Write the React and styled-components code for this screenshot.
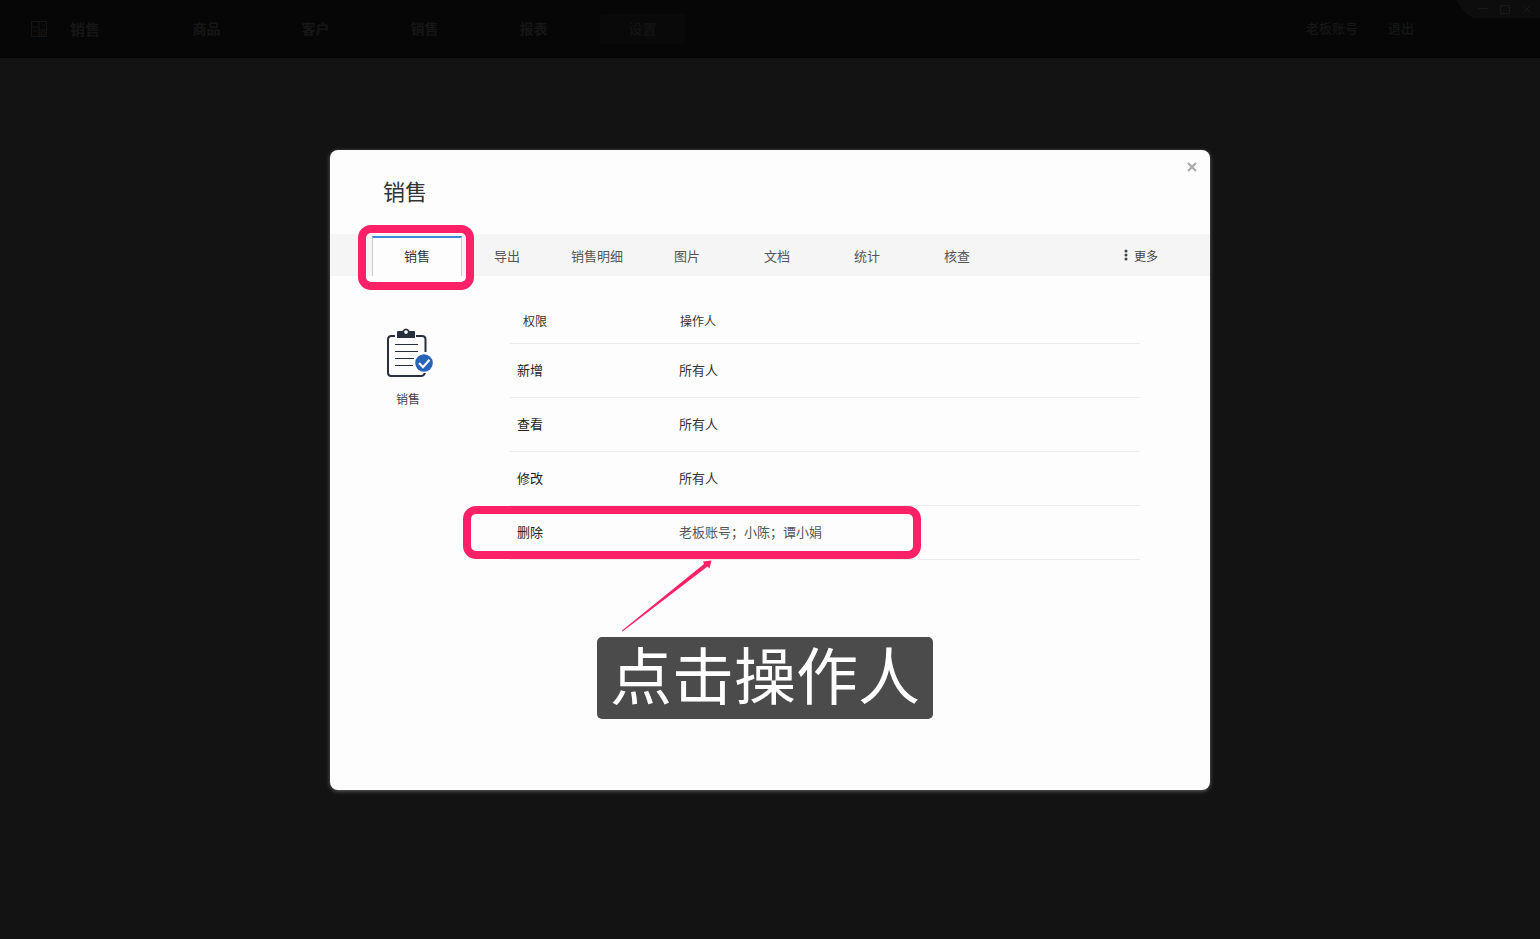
import React from "react";
import styled, { createGlobalStyle } from "styled-components";

const GlobalStyle = createGlobalStyle`
  *, *::before, *::after { box-sizing: border-box; }
  body {
    margin: 0;
    background: #131313;
    color: #333;
    font-family: "Noto Sans CJK SC", "Noto Sans", sans-serif;
  }
  button { font: inherit; border: 0; padding: 0; background: none; cursor: pointer; }
`;

const PINK = "#ff2168";

const Page = styled.div`
  min-height: 100vh;
  display: flex;
  flex-direction: column;
`;

const Header = styled.header`
  position: relative;
  height: 58px;
  display: flex;
  align-items: center;
  padding: 0 126px 0 30px;
  background: #060606;
  color: #161616;
`;

const Brand = styled.div`
  width: 134px;
  display: flex;
  align-items: center;
  gap: 22px;
  font-size: 15px;
  line-height: 20px;
  font-weight: 700;
`;

const Nav = styled.nav`
  display: flex;
  gap: 24px;
`;

const NavButton = styled.button`
  && {
    width: 85px;
    height: 30px;
    padding-bottom: 2px;
    border-radius: 2px;
    color: ${(p) => (p.$active ? "#131313" : "#161616")};
    background: ${(p) => (p.$active ? "#090909" : "none")};
    font-size: 14px;
    font-weight: 700;
  }
`;

const Account = styled.div`
  margin-left: auto;
  padding-bottom: 2px;
  display: flex;
  gap: 30px;
  font-size: 13px;
  line-height: 20px;
  font-weight: 500;
`;

const AccountButton = styled.button`
  && { color: inherit; }
`;

const WindowControls = styled.div`
  position: absolute;
  top: 0;
  right: 0;
  width: 84px;
  height: 18px;
  padding-left: 16px;
  display: flex;
  align-items: center;
  background: #0d0d0d;
  clip-path: polygon(0 0, 100% 0, 100% 100%, 17px 100%, 10px 14px);
`;

const WindowButton = styled.button`
  && {
    width: 22px;
    height: 18px;
    display: grid;
    place-items: center;
    color: #191919;
  }
`;

const Main = styled.main`
  flex: 1;
  display: flex;
  justify-content: center;
  align-items: flex-start;
  padding: 92px 24px;
`;

const Dialog = styled.section`
  position: relative;
  width: 100%;
  max-width: 880px;
  min-height: 640px;
  border-radius: 8px;
  background: #fdfdfd;
  box-shadow: 0 1px 4px rgba(255, 255, 255, 0.35);
`;

const DialogHeader = styled.div`
  height: 84px;
  padding: 0 12px 0 53px;
  display: flex;
  justify-content: space-between;
`;

const Title = styled.h1`
  margin: 24px 0 0;
  font-size: 22px;
  line-height: 32px;
  font-weight: 400;
  color: #333;
`;

const CloseButton = styled.button`
  && {
    width: 12px;
    height: 34px;
    display: grid;
    place-items: center;
    color: #aaa;
  }
`;

const TabBar = styled.div`
  display: flex;
  height: 42px;
  padding: 0 52px 0 42px;
  background: #f5f5f5;
`;

const Tab = styled.button`
  && {
    position: relative;
    width: 90px;
    margin-top: 2px;
    padding-bottom: 4px;
    font-size: 13px;
    color: ${(p) => (p.$active ? "#333" : "#555")};
    background: ${(p) => (p.$active ? "#fdfdfd" : "none")};
    border: solid ${(p) => (p.$active ? "#ccc" : "transparent")};
    border-width: 0 1px;
    border-top: 2px solid ${(p) => (p.$active ? "#3a8bd8" : "transparent")};
  }
`;

const TabMarker = styled.span`
  position: absolute;
  inset: -13px -13px -14px -15px;
  border: 8px solid ${PINK};
  border-radius: 13px;
  pointer-events: none;
`;

const MoreButton = styled.button`
  && {
    margin-left: auto;
    display: flex;
    align-items: center;
    gap: 6px;
    font-size: 12px;
    color: #444;
  }
`;

const Content = styled.div`
  display: flex;
  padding: 22px 70px 0 50px;
`;

const FormCard = styled.div`
  width: 56px;
  margin: 30px 74px 0 0;
  display: flex;
  flex-direction: column;
  align-items: center;
  gap: 10px;
  font-size: 12px;
  line-height: 18px;
  color: #444;
`;

const Table = styled.table`
  flex: 1;
  table-layout: fixed;
  border-collapse: separate;
  border-spacing: 0;
  text-align: left;
`;

const HeadCell = styled.th`
  width: ${(p) => (p.$first ? "162px" : "auto")};
  height: 46px;
  padding: 0 0 0 ${(p) => (p.$first ? 13 : 8)}px;
  border-bottom: 1px solid #ebebeb;
  font-size: 12px;
  font-weight: 400;
  color: #333;
`;

const NameCell = styled.th`
  position: relative;
  height: 54px;
  padding: 0 0 2px 7px;
  border-bottom: 1px solid #ebebeb;
  font-size: 13px;
  font-weight: 400;
  color: #222;
`;

const PeopleCell = styled.td`
  height: 54px;
  padding: 0 0 2px 7px;
  border-bottom: 1px solid #ebebeb;
  font-size: 13px;
  color: ${(p) => (p.$muted ? "#555" : "#333")};
`;

const RowMarker = styled.span`
  position: absolute;
  top: 0;
  left: -47px;
  width: 458px;
  height: 53px;
  border: 8px solid ${PINK};
  border-radius: 13px;
  pointer-events: none;
`;

const Arrow = styled.svg`
  position: absolute;
  left: 290px;
  top: 410px;
`;

const Callout = styled.div`
  position: absolute;
  left: 267px;
  top: 487px;
  height: 82px;
  padding: 0 13px;
  border-radius: 5px;
  background: #4b4b4b;
  color: #fff;
  font-size: 62px;
  line-height: 72px;
  font-weight: 400;
  white-space: nowrap;
`;

const BrandIcon = () => (
  <svg width="18" height="18" viewBox="0 0 18 18" fill="none" stroke="#141414">
    <rect x="1.5" y="1.500" width="15" height="15" />
    <path d="M9 2v5H2M9 7v10M9 10h8M3 11h4M12 5h3" stroke="#111614" />
    <path d="M11 12h4v3h-4z" stroke="#18130f" />
  </svg>
);

const ClipboardIcon = () => (
  <svg width="48" height="52" viewBox="2 1 48 52" overflow="visible" fill="none">
    <g transform="translate(3 0)">
      <path
        d="M10 9H6.500Q3 9 3 12.500V45.500Q3 49 6.500 49H36Q39 49 40 46M31 9H37Q40.500 9 40.500 12.500V25"
        stroke="#28303f"
        strokeWidth="2"
      />
      <path
        fillRule="evenodd"
        d="M13 4h4.500a3.700 3.700 0 0 1 7 0H29q1 0 1 1v6H12V5q0-1 1-1zM21 3.200a1.800 1.800 0 1 0 .01 0z"
        fill="#28303f"
      />
      <path d="M10 17.500h23M10 24.500h23M10 31.500h19M10 38.500h18" stroke="#28303f" strokeWidth="1.200" />
      <circle cx="39" cy="36" r="10" fill="#fdfdfd" />
      <circle cx="39" cy="36" r="8.800" fill="#2763b9" />
      <path d="M34 36l4 4.200 6.500-7.500" stroke="#fff" strokeWidth="2.200" />
    </g>
  </svg>
);

const navItems = ["商品", "客户", "销售", "报表", "设置"];
const tabs = ["销售", "导出", "销售明细", "图片", "文档", "统计", "核查"];
const rows = [
  { name: "新增", people: "所有人" },
  { name: "查看", people: "所有人" },
  { name: "修改", people: "所有人" },
  { name: "删除", people: "老板账号；小陈；谭小娟", marked: true },
];

export default function App() {
  return (
    <Page lang="zh-CN">
      <GlobalStyle />
      <Header>
        <Brand>
          <BrandIcon />
          销售
        </Brand>
        <Nav>
          {navItems.map((item) => (
            <NavButton key={item} $active={item === "设置"}>
              {item}
            </NavButton>
          ))}
        </Nav>
        <Account>
          <AccountButton>老板账号</AccountButton>
          <AccountButton>退出</AccountButton>
        </Account>
        <WindowControls>
          <WindowButton aria-label="最小化">
            <svg width="10" height="10" stroke="currentColor"><path d="M0 4.500h10" /></svg>
          </WindowButton>
          <WindowButton aria-label="最大化">
            <svg width="10" height="10" stroke="currentColor" fill="none"><path d="M.5 1.500h9v8h-9z" /></svg>
          </WindowButton>
          <WindowButton aria-label="关闭窗口">
            <svg width="10" height="10" stroke="currentColor"><path d="M1 1l8 8M9 1l-8 8" /></svg>
          </WindowButton>
        </WindowControls>
      </Header>
      <Main>
        <Dialog role="dialog" aria-labelledby="dialog-title">
          <DialogHeader>
            <Title id="dialog-title">销售</Title>
            <CloseButton aria-label="关闭">
              <svg width="10" height="10" stroke="currentColor" strokeWidth="2.200">
                <path d="M1 1l8 8M9 1l-8 8" />
              </svg>
            </CloseButton>
          </DialogHeader>
          <TabBar>
            {tabs.map((tab, i) => (
              <Tab key={tab} $active={i === 0}>
                {tab}
                {i === 0 && <TabMarker />}
              </Tab>
            ))}
            <MoreButton>
              <svg width="4" height="12" fill="currentColor">
                <circle cx="2" cy="2" r="1.500" />
                <circle cx="2" cy="6" r="1.500" />
                <circle cx="2" cy="10" r="1.500" />
              </svg>
              更多
            </MoreButton>
          </TabBar>
          <Content>
            <FormCard>
              <ClipboardIcon />
              销售
            </FormCard>
            <Table>
              <thead>
                <tr>
                  <HeadCell $first scope="col">权限</HeadCell>
                  <HeadCell scope="col">操作人</HeadCell>
                </tr>
              </thead>
              <tbody>
                {rows.map((row) => (
                  <tr key={row.name}>
                    <NameCell scope="row">
                      {row.name}
                      {row.marked && <RowMarker />}
                    </NameCell>
                    <PeopleCell $muted={row.marked}>{row.people}</PeopleCell>
                  </tr>
                ))}
              </tbody>
            </Table>
          </Content>
          <Arrow width="92" height="72" viewBox="0 0 92 72" aria-hidden="true">
            <path
              d="M2 70.500L84 4 83 1.500 91.500.5 89.500 8.500 87.500 6.500 2.500 71.500z"
              fill={PINK}
            />
          </Arrow>
          <Callout>点击操作人</Callout>
        </Dialog>
      </Main>
    </Page>
  );
}
